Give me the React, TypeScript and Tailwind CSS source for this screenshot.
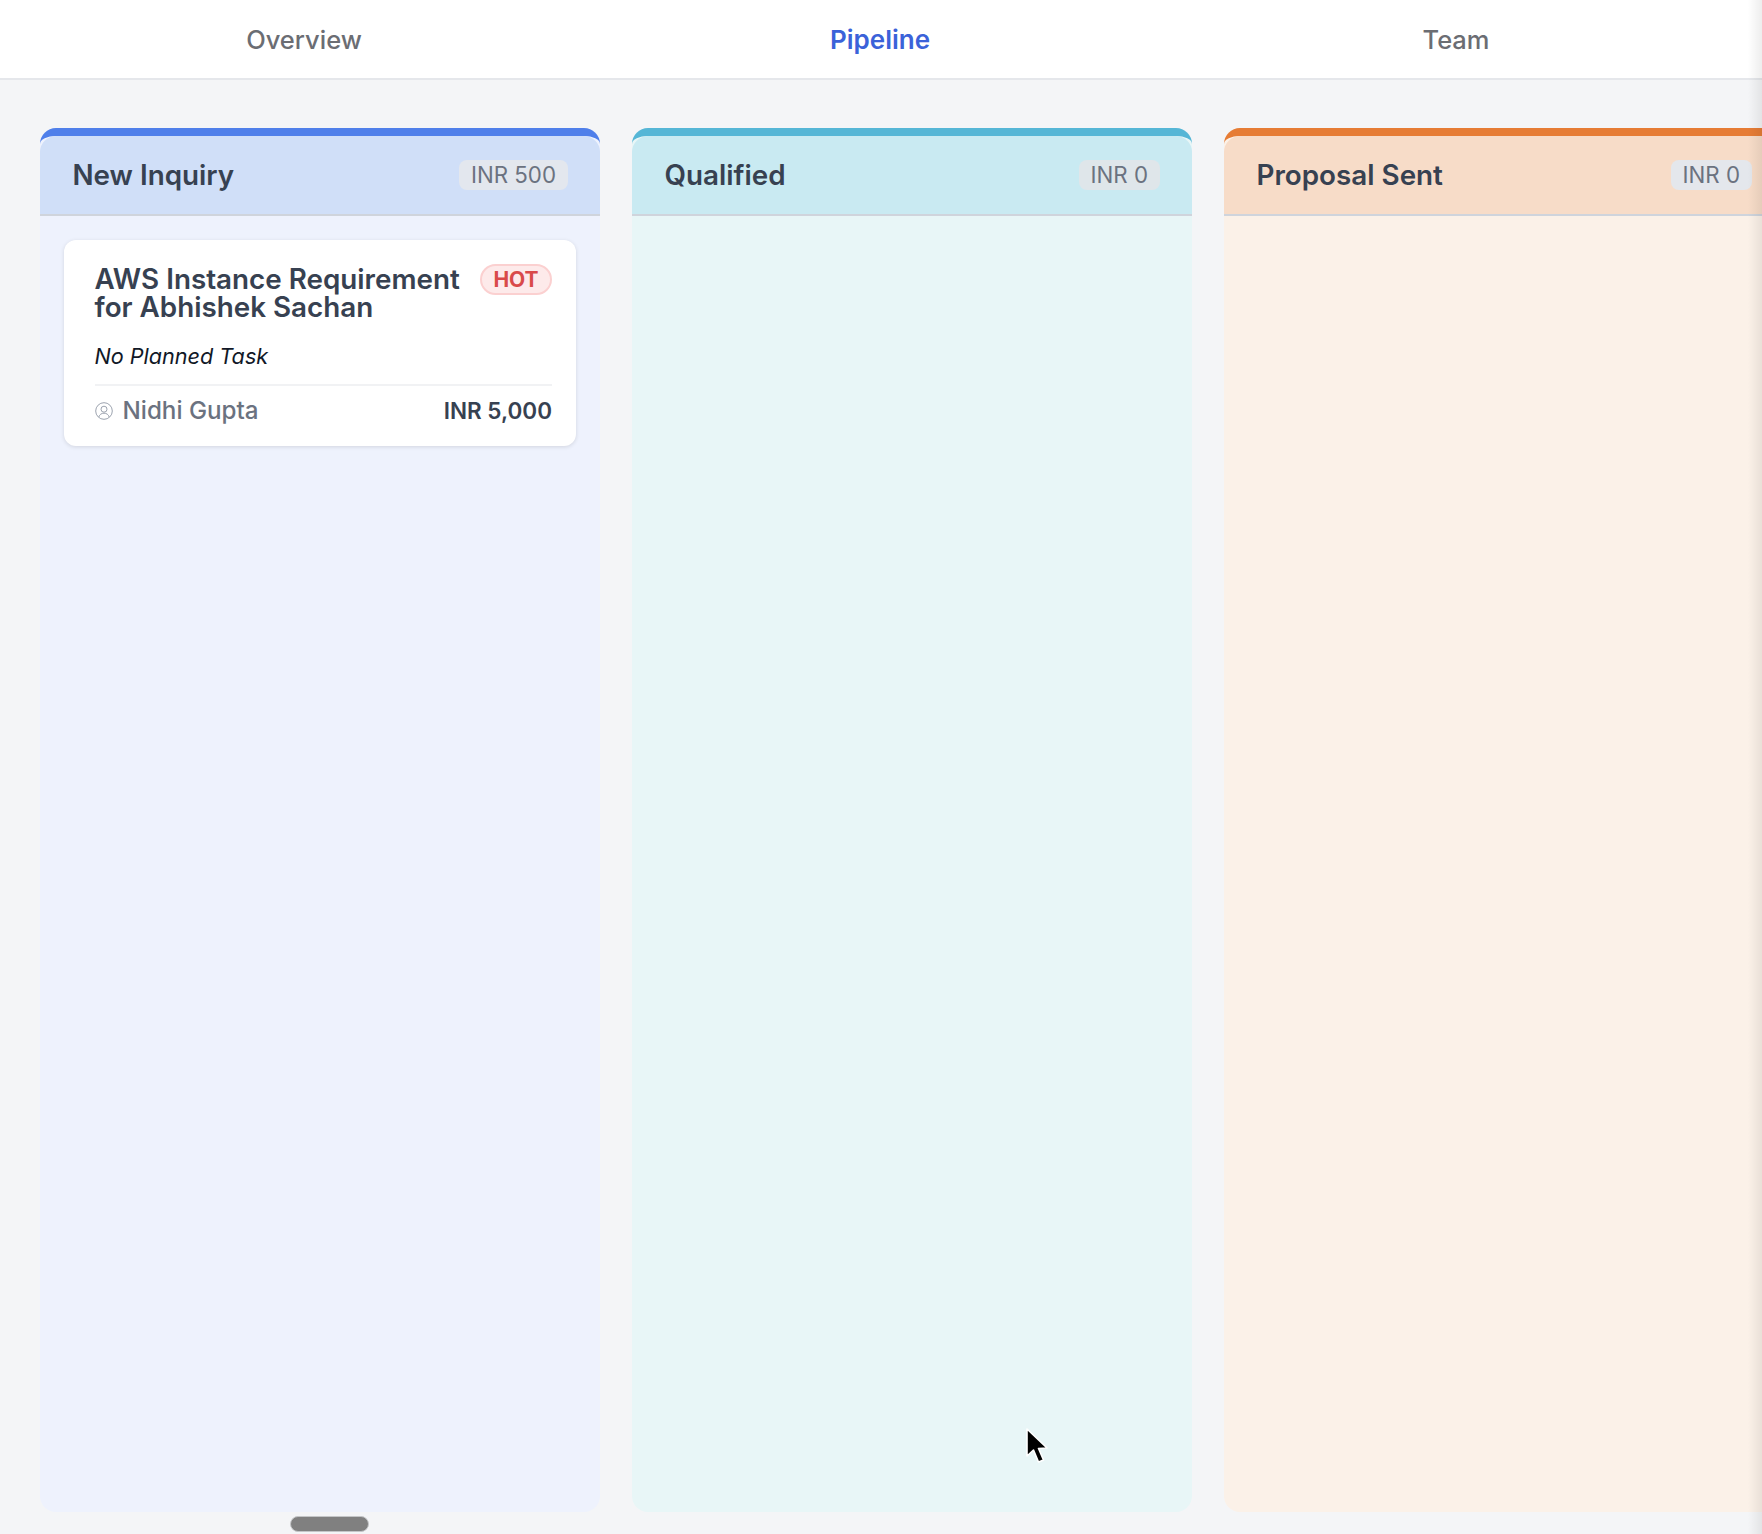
import React from "react";

const font = { fontFamily: "Inter, 'Liberation Sans', sans-serif" };

function Column({ title, amount, top, head, body, badge, children }: { title: string; amount: string; top: string; head: string; body: string; badge: string; children?: React.ReactNode }) {
  return (
    <div className={`w-[560px] shrink-0 rounded-2xl border-t-8 flex flex-col overflow-hidden ${top} ${body}`}>
      <div className={`h-[80px] shrink-0 rounded-t-2xl border-b-2 border-[#cfd4dc] pl-[32.5px] pr-[32px] flex items-center justify-between ${head}`}>
        <span className="text-[27.8px] leading-none pt-[2px] font-semibold text-[#374151]">{title}</span>
        <span className={`h-[30px] px-[12px] rounded-lg flex items-center text-[22.3px] text-[#6b7280] ${badge}`}>{amount}</span>
      </div>
      <div className="px-[24px] pt-[24px] flex-1">{children}</div>
    </div>
  );
}

export default function App() {
  return (
    <div style={font} className="relative h-[1534px] w-full overflow-hidden bg-[#f4f5f7] flex flex-col">
      <nav className="h-[80px] shrink-0 bg-white border-b-2 border-[#e5e7eb] px-4 flex">
        <div className="flex-1 flex items-center justify-center pt-[2px] text-[25.5px] font-medium text-[#6b6d73]">Overview</div>
        <div className="flex-1 flex items-center justify-center text-[26px] font-semibold text-[#3b62d9]">Pipeline</div>
        <div className="flex-1 flex items-center justify-center pt-[2px] pr-[2px] text-[25.5px] font-medium text-[#6b6d73]">Team</div>
      </nav>
      <main className="flex-1 min-h-0 flex gap-[32px] pl-[40px] pt-[48px] pb-[22px]">
        <Column title="New Inquiry" amount="INR 500" top="border-[#4f7fea]" head="bg-[#d0dff8]" body="bg-[#eef2fd]" badge="bg-[#e3e7ee]">
          <article className="h-[206px] rounded-xl bg-white shadow-[0_1px_4px_rgba(0,0,0,0.12)] pl-[30.5px] pr-[24px] pt-[25px] flex flex-col">
            <div className="flex justify-between items-start">
              <h3 className="text-[27.8px] leading-[28px] font-semibold text-[#374151]">AWS Instance Requirement<br />for Abhishek Sachan</h3>
              <span className="-mt-[1px] h-[31px] w-[72px] rounded-full border-2 border-[#fbd0d0] bg-[#fdeaea] text-[#d94a4a] text-[21px] font-bold flex items-center justify-center">HOT</span>
            </div>
            <p className="mt-[21px] text-[21.6px] leading-[28px] italic text-[#111827]">No Planned Task</p>
            <div className="mt-[14px] pt-[7px] border-t-2 border-[#f1f2f4] flex items-center justify-between">
              <div className="flex items-center gap-[10px]">
                <svg className="-mt-[1px]" width="18" height="18" viewBox="0 0 18 18" fill="none" stroke="#9ca3af" strokeWidth="1">
                  <circle cx="9" cy="9" r="8.3" />
                  <circle cx="9" cy="7.2" r="3" />
                  <path d="M3.8 15c.8-2.6 2.8-3.8 5.2-3.8s4.4 1.2 5.2 3.8" />
                </svg>
                <span className="text-[24.2px] font-medium text-[#6b7280]">Nidhi Gupta</span>
              </div>
              <span className="text-[22.5px] font-semibold text-[#374151]">INR 5,000</span>
            </div>
          </article>
        </Column>
        <Column title="Qualified" amount="INR 0" top="border-[#55b6d6]" head="bg-[#c9eaf2]" body="bg-[#e8f6f7]" badge="bg-[#dfe6ea]" />
        <Column title="Proposal Sent" amount="INR 0" top="border-[#e67c35]" head="bg-[#f7dcc8]" body="bg-[#fbf1e8]" badge="bg-[#e4e7ec]" />
      </main>
      <div className="absolute right-0 top-0 bottom-0 w-[14px] bg-gradient-to-r from-transparent to-[#00000012]" />
      <div className="absolute left-[290px] top-[1516px] h-[16px] w-[79px] rounded-full bg-[#808080] border border-[#c4c6c8]" />
      <svg className="absolute left-[1025px] top-[1428px]" width="24" height="38" viewBox="0 0 24 38">
        <path d="M2 1 L2 28 L8.5 22 L13.5 34 L18.5 32 L13.5 20.5 L22 20 Z" fill="#000" stroke="#fff" strokeWidth="1.6" strokeLinejoin="round" />
      </svg>
    </div>
  );
}
